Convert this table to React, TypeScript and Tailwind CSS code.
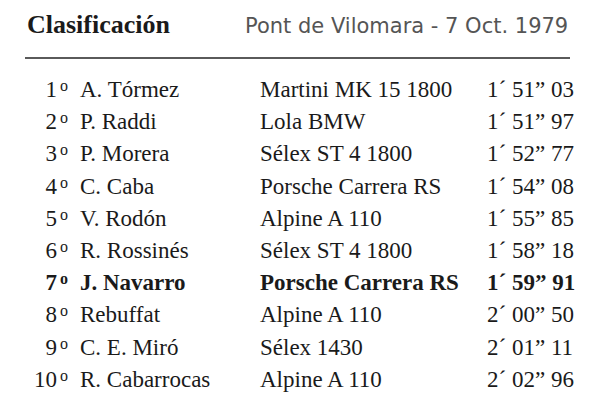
import React from 'react';

interface Result {
  pos: number;
  driver: string;
  car: string;
  min: string;
  sec: string;
  hund: string;
  bold?: boolean;
}

const results: Result[] = [
  { pos: 1, driver: 'A. Tórmez', car: 'Martini MK 15 1800', min: '1', sec: '51', hund: '03' },
  { pos: 2, driver: 'P. Raddi', car: 'Lola BMW', min: '1', sec: '51', hund: '97' },
  { pos: 3, driver: 'P. Morera', car: 'Sélex ST 4 1800', min: '1', sec: '52', hund: '77' },
  { pos: 4, driver: 'C. Caba', car: 'Porsche Carrera RS', min: '1', sec: '54', hund: '08' },
  { pos: 5, driver: 'V. Rodón', car: 'Alpine A 110', min: '1', sec: '55', hund: '85' },
  { pos: 6, driver: 'R. Rossinés', car: 'Sélex ST 4 1800', min: '1', sec: '58', hund: '18' },
  { pos: 7, driver: 'J. Navarro', car: 'Porsche Carrera RS', min: '1', sec: '59', hund: '91', bold: true },
  { pos: 8, driver: 'Rebuffat', car: 'Alpine A 110', min: '2', sec: '00', hund: '50' },
  { pos: 9, driver: 'C. E. Miró', car: 'Sélex 1430', min: '2', sec: '01', hund: '11' },
  { pos: 10, driver: 'R. Cabarrocas', car: 'Alpine A 110', min: '2', sec: '02', hund: '96' },
];

export default function App() {
  return (
    <div className="w-[600px] h-[419px] bg-white text-[#1a1a1a] overflow-hidden">
      <div className="ml-[25px] w-[545px] pt-[9px]">
        <div className="flex items-baseline">
          <h1 className="w-[220px] pl-[2px] font-['Liberation_Serif',serif] font-bold text-[26px] leading-[32px]">
            Clasificación
          </h1>
          <p className="font-['DejaVu_Sans',sans-serif] text-[21px] leading-[32px] text-[#555]">
            Pont de Vilomara - 7 Oct. 1979
          </p>
        </div>

        <div className="mt-[15px] h-[2px] bg-[#5a5a5a]" />

        <div className="mt-[15px] font-['Liberation_Serif',serif] text-[23px] leading-[32.2px]">
          {results.map((r) => (
            <div
              key={r.pos}
              className={`grid grid-cols-[43px_192px_227px_auto] h-[32.2px] ${
                r.bold ? 'font-bold' : ''
              }`}
            >
              <span className="text-right whitespace-nowrap">
                {r.pos}
                <span className="relative -top-[6px] text-[16px] leading-none ml-[3px]">o</span>
              </span>
              <span className="whitespace-nowrap pl-[12px]">{r.driver}</span>
              <span className="whitespace-nowrap">{r.car}</span>
              <span className="whitespace-nowrap">
                {r.min}´ {r.sec}” {r.hund}
              </span>
            </div>
          ))}
        </div>
      </div>
    </div>
  );
}
